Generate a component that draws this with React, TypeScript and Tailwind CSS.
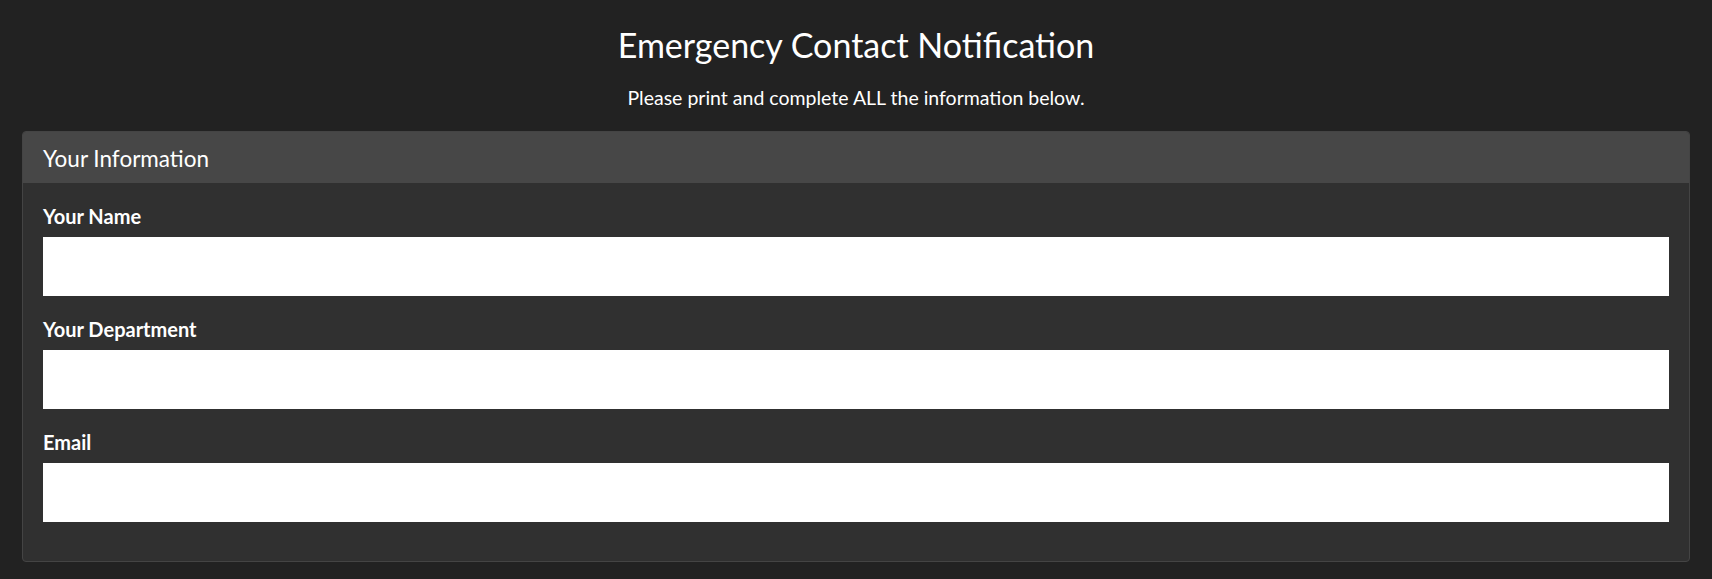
import React from "react";

const fields = ["Your Name", "Your Department", "Email"];

export default function App() {
  return (
    <div
      className="min-h-screen bg-[#222222] px-[22px] pt-[24px] pb-[17px] text-white"
      style={{ fontFamily: "Lato, 'Noto Sans', sans-serif" }}
    >
      <h1 className="text-center text-[34px] leading-[41px] font-normal">
        Emergency Contact Notification
      </h1>
      <p className="mt-[21px] text-center text-[19.5px] leading-[24px]">
        Please print and complete ALL the information below.
      </p>
      <div className="mt-[21px] overflow-hidden rounded-[4px] border border-[#444444] bg-[#303030]">
        <div className="flex h-[51px] items-center bg-[#474747] px-[20px] pt-[2px] text-[22.5px]">
          Your Information
        </div>
        <div className="px-[20px] pt-[21px] pb-[39px]">
          {fields.map((f, i) => (
            <div key={f} className={i > 0 ? "mt-[21px]" : ""}>
              <label className="block text-[20px] leading-[24px] font-bold">{f}</label>
              <input
                type="text"
                className="mt-[9px] block h-[59px] w-full bg-white text-black outline-none"
              />
            </div>
          ))}
        </div>
      </div>
    </div>
  );
}
